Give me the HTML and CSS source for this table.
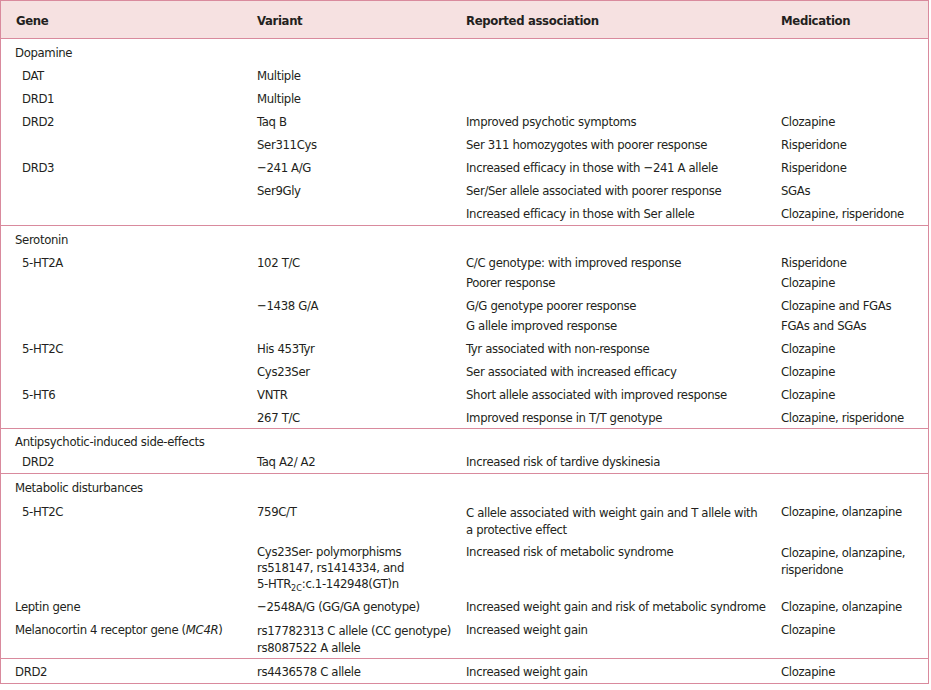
FILE: index.html
```html
<!DOCTYPE html>
<html lang="en">
<head>
<meta charset="utf-8">
<title>Pharmacogenetics of antipsychotic response</title>
<link rel="stylesheet" href="styles.css">
</head>
<body>
<div class="frame">
<table class="gt">
  <colgroup>
    <col class="c1"><col class="c2"><col class="c3"><col class="c4">
  </colgroup>
  <thead>
    <tr><th class="g">Gene</th><th>Variant</th><th>Reported association</th><th>Medication</th></tr>
  </thead>
  <tbody>
    <tr class="first"><td class="grp" colspan="4">Dopamine</td></tr>
    <tr><td class="sub">DAT</td><td>Multiple</td><td></td><td></td></tr>
    <tr><td class="sub">DRD1</td><td>Multiple</td><td></td><td></td></tr>
    <tr><td class="sub">DRD2</td><td>Taq B</td><td>Improved psychotic symptoms</td><td>Clozapine</td></tr>
    <tr><td class="sub"></td><td>Ser311Cys</td><td>Ser 311 homozygotes with poorer response</td><td>Risperidone</td></tr>
    <tr><td class="sub">DRD3</td><td>&minus;241 A/G</td><td>Increased efficacy in those with &minus;241 A allele</td><td>Risperidone</td></tr>
    <tr><td class="sub"></td><td>Ser9Gly</td><td>Ser/Ser allele associated with poorer response</td><td>SGAs</td></tr>
    <tr><td class="sub"></td><td></td><td>Increased efficacy in those with Ser allele</td><td>Clozapine, risperidone</td></tr>
  </tbody>
  <tbody>
    <tr class="first"><td class="grp" colspan="4">Serotonin</td></tr>
    <tr><td class="sub">5-HT2A</td><td>102 T/C</td><td>C/C genotype: with improved response</td><td>Risperidone</td></tr>
    <tr class="cont"><td class="sub"></td><td></td><td>Poorer response</td><td>Clozapine</td></tr>
    <tr><td class="sub"></td><td>&minus;1438 G/A</td><td>G/G genotype poorer response</td><td>Clozapine and FGAs</td></tr>
    <tr class="cont"><td class="sub"></td><td></td><td>G allele improved response</td><td>FGAs and SGAs</td></tr>
    <tr><td class="sub">5-HT2C</td><td>His 453Tyr</td><td>Tyr associated with non-response</td><td>Clozapine</td></tr>
    <tr><td class="sub"></td><td>Cys23Ser</td><td>Ser associated with increased efficacy</td><td>Clozapine</td></tr>
    <tr><td class="sub">5-HT6</td><td>VNTR</td><td>Short allele associated with improved response</td><td>Clozapine</td></tr>
    <tr><td class="sub"></td><td>267 T/C</td><td>Improved response in T/T genotype</td><td>Clozapine, risperidone</td></tr>
  </tbody>
  <tbody>
    <tr class="first side"><td class="grp" colspan="4">Antipsychotic-induced side-effects</td></tr>
    <tr class="side-last"><td class="sub">DRD2</td><td>Taq A2/ A2</td><td>Increased risk of tardive dyskinesia</td><td></td></tr>
  </tbody>
  <tbody>
    <tr class="first"><td class="grp" colspan="4">Metabolic disturbances</td></tr>
    <tr class="r759"><td class="sub">5-HT2C</td><td>759C/T</td><td class="lh17">C allele associated with weight gain and T allele with<br>a protective effect</td><td>Clozapine, olanzapine</td></tr>
    <tr class="rcys"><td class="sub"></td><td>Cys23Ser- polymorphisms<br>rs518147, rs1414334, and<br>5-HTR<sub>2C</sub>:c.1-142948(GT)n</td><td>Increased risk of metabolic syndrome</td><td class="lh17">Clozapine, olanzapine,<br>risperidone</td></tr>
    <tr><td class="sub lep">Leptin gene</td><td>&minus;2548A/G (GG/GA genotype)</td><td>Increased weight gain and risk of metabolic syndrome</td><td>Clozapine, olanzapine</td></tr>
    <tr><td class="sub lep">Melanocortin 4 receptor gene (<i>MC4R</i>)</td><td class="lh17">rs17782313 C allele (CC genotype)<br>rs8087522 A allele</td><td>Increased weight gain</td><td>Clozapine</td></tr>
  </tbody>
  <tbody>
    <tr class="first last"><td class="grp">DRD2</td><td>rs4436578 C allele</td><td>Increased weight gain</td><td>Clozapine</td></tr>
  </tbody>
</table>
</div>
</body>
</html>
```

FILE: styles.css
```css
html, body {
  margin: 0;
  padding: 0;
  background: #ffffff;
}

body {
  font-family: "DejaVu Sans Condensed", "DejaVu Sans", sans-serif;
  font-stretch: condensed;
  font-size: 13px;
  letter-spacing: -0.35px;
  color: #231f20;
}

.frame {
  width: 927px;
  border: 1px solid #d98a9d;
}

.gt {
  width: 927px;
  border-collapse: collapse;
  table-layout: fixed;
}

.c1 { width: 256px; }
.c2 { width: 209px; }
.c3 { width: 315px; }
.c4 { width: 147px; }

.gt th {
  background: #f6e1e1;
  text-align: left;
  font-weight: bold;
  line-height: 16px;
  padding: 12px 0 9px 0;
  border-bottom: 1px solid #d98a9d;
  white-space: nowrap;
}

.gt th.g { padding-left: 15px; }

.gt td {
  vertical-align: top;
  line-height: 16px;
  padding: 4.5px 0 2.5px 0;
  white-space: nowrap;
}

.gt td.grp { padding-left: 14px; }
.gt td.sub { padding-left: 21px; }
.gt td.sub.lep { padding-left: 14px; }

.gt tbody + tbody tr.first td {
  border-top: 1px solid #d98a9d;
}

.gt tr.first td { padding-top: 6px; }

.gt tr.cont td { padding-top: 1.5px; }

.gt tr.side td { padding-top: 5px; padding-bottom: 0; }
.gt tr.side-last td { padding-top: 4px; padding-bottom: 2.5px; }

.gt tr.r759 td { padding-top: 5.5px; padding-bottom: 2px; }
.gt tr.rcys td { padding-top: 4px; }

.gt tr.last td { padding-top: 5px; padding-bottom: 3px; }

.gt td.lh17 { line-height: 17px; }

.gt sub {
  font-size: 9px;
  letter-spacing: 0;
  line-height: 0;
  vertical-align: -3px;
}
```
